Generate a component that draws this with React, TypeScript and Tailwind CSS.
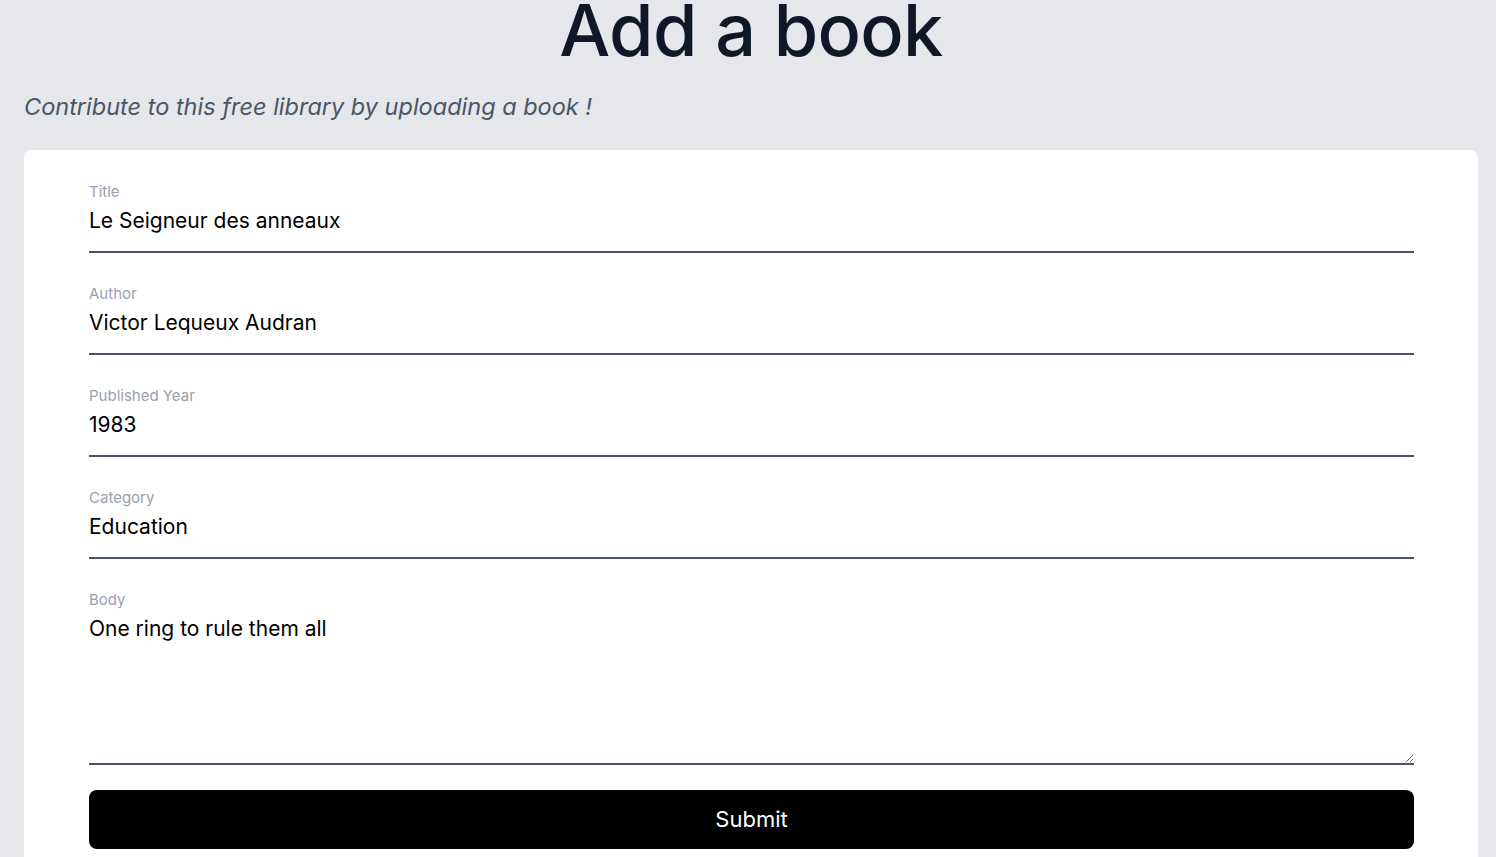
import React from 'react';

const Field = ({ label, value }: { label: string; value: string }) => (
  <div className="flex flex-col">
    <label className="text-[15px] leading-5 text-gray-400">{label}</label>
    <input
      type="text"
      defaultValue={value}
      className="mt-[5px] pb-4 text-[21px] leading-7 text-black bg-transparent border-b-2 border-gray-600 outline-none"
    />
  </div>
);

export default function App() {
  const fields = [
    { label: 'Title', value: 'Le Seigneur des anneaux' },
    { label: 'Author', value: 'Victor Lequeux Audran' },
    { label: 'Published Year', value: '1983' },
    { label: 'Category', value: 'Education' },
  ];

  return (
    <div
      className="min-h-screen bg-gray-200 pl-6 pr-[18px] overflow-hidden"
      style={{ fontFamily: 'Inter, "Noto Sans", sans-serif' }}
    >
      <h1 className="-mt-[10px] text-center text-7xl leading-[80px] font-medium text-gray-900 tracking-[-0.01em]">
        Add a book
      </h1>
      <p className="mt-[21px] text-[23.5px] leading-8 italic text-gray-600">
        Contribute to this free library by uploading a book !
      </p>

      <form className="mt-[27px] bg-white rounded-lg pl-[65px] pr-16 pt-[32px] pb-10 flex flex-col">
        <div className="flex flex-col gap-[31px]">
          {fields.map(f => (
            <Field key={f.label} label={f.label} value={f.value} />
          ))}
          <div className="flex flex-col">
            <label className="text-[15px] leading-5 text-gray-400">Body</label>
            <textarea
              defaultValue="One ring to rule them all"
              className="mt-[5px] h-[150px] text-[21px] leading-7 text-black bg-transparent border-b-2 border-gray-600 outline-none"
            />
          </div>
        </div>
        <button
          type="button"
          className="mt-[25px] h-[59px] w-full rounded-lg bg-black text-white text-[22px]"
        >
          Submit
        </button>
      </form>
    </div>
  );
}
